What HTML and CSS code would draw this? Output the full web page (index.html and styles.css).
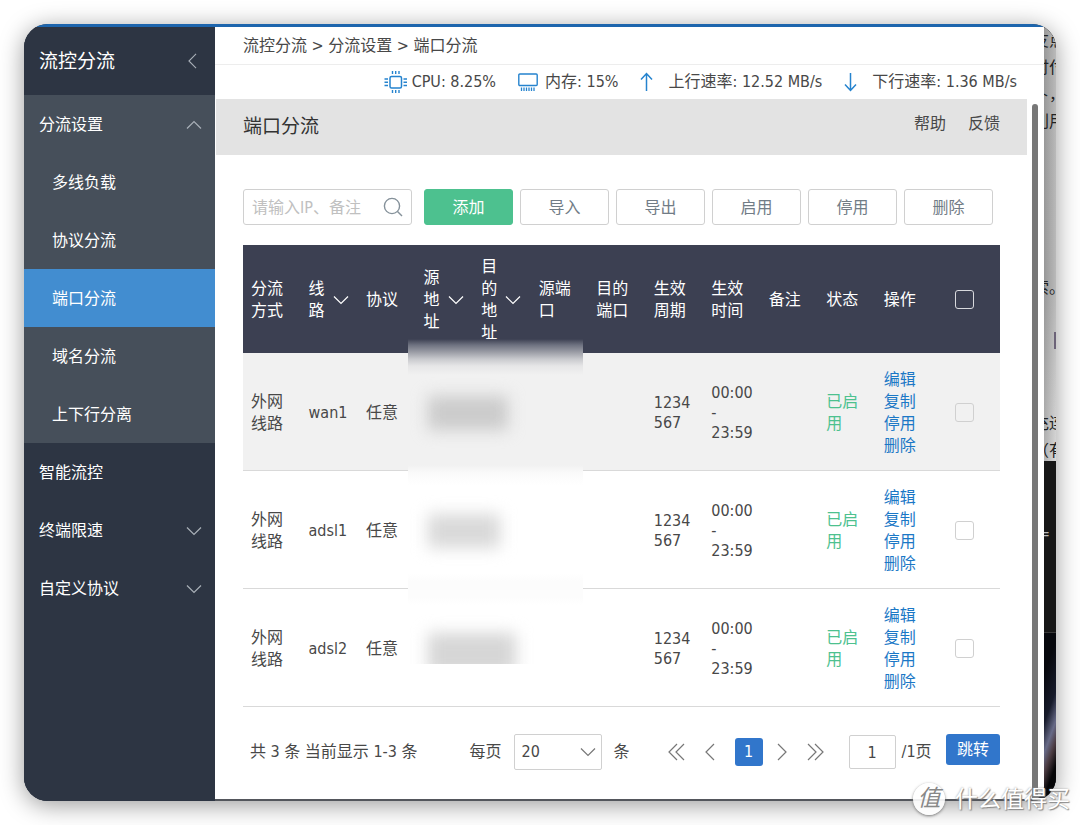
FILE: index.html
```html
<!DOCTYPE html>
<html lang="zh-CN">
<head>
<meta charset="utf-8">
<title>端口分流</title>
<link rel="stylesheet" href="styles.css">
</head>
<body>
<svg class="defs" aria-hidden="true">
  <symbol id="down" viewBox="0 0 16 10"><path d="M1 1.5 8 8.5 15 1.5"/></symbol>
  <symbol id="up" viewBox="0 0 16 10"><path d="M1 8.5 8 1.5 15 8.5"/></symbol>
  <symbol id="left" viewBox="0 0 10 18"><path d="M9 1 1 9 9 17"/></symbol>
  <symbol id="right" viewBox="0 0 10 18"><path d="M1 1 9 9 1 17"/></symbol>
  <symbol id="first" viewBox="0 0 17 18"><path d="M9 1 1 9 9 17M16 1 8 9 16 17"/></symbol>
  <symbol id="last" viewBox="0 0 17 18"><path d="M1 1 9 9 1 17M8 1 16 9 8 17"/></symbol>
</svg>

<div class="frame">
  <div class="topline"></div>
  <div class="window">
    <nav class="sidebar">
      <div class="side-head"><span>流控分流</span><svg class="ico chev-left"><use href="#left"/></svg></div>
      <div class="side-open">
        <a class="item" href="#"><span>分流设置</span><svg class="ico chev"><use href="#up"/></svg></a>
        <a class="item sub" href="#">多线负载</a>
        <a class="item sub" href="#">协议分流</a>
        <a class="item sub active" href="#">端口分流</a>
        <a class="item sub" href="#">域名分流</a>
        <a class="item sub" href="#">上下行分离</a>
      </div>
      <a class="item" href="#">智能流控</a>
      <a class="item" href="#"><span>终端限速</span><svg class="ico chev"><use href="#down"/></svg></a>
      <a class="item" href="#"><span>自定义协议</span><svg class="ico chev"><use href="#down"/></svg></a>
    </nav>

    <main class="main">
      <div class="crumbs">流控分流 &gt; 分流设置 &gt; 端口分流</div>
      <div class="stats">
        <div class="stat cpu">
          <svg width="24" height="24" viewBox="0 0 24 24"><rect x="6" y="6.5" width="11.500" height="11.500" rx="1.500" stroke-width="1.500"/><path d="M8.500 1v3M11.700 1v3M15 1v3M8.500 20v3M11.700 20v3M15 20v3M.5 9h3.500M.5 12.200h3.500M.5 15.500h3.500M19.500 9H23M19.500 12.200H23M19.500 15.500H23" stroke-width="1.400"/></svg>
          <span>CPU: 8.25%</span>
        </div>
        <div class="stat mem">
          <svg width="20" height="20" viewBox="0 0 20 20"><rect x=".8" y="2" width="18.400" height="11.500" rx="1" stroke-width="1.400"/><path d="M3.500 15.500v3.500M6 15.500v3.500M8.500 15.500v3.500M11 15.500v3.500M13.500 15.500v3.500M16 15.500v3.500" stroke-width="1.300"/></svg>
          <span>内存: 15%</span>
        </div>
        <div class="stat rate">
          <svg width="13" height="20" viewBox="0 0 13 20"><path d="M6.500 19V1.500M1 7.500 6.500 1.500 12 7.500" stroke-width="1.500"/></svg>
          <span>上行速率: 12.52 MB/s</span>
        </div>
        <div class="stat rate">
          <svg width="13" height="20" viewBox="0 0 13 20"><path d="M6.500 1v17.500M1 12.500 6.500 18.500 12 12.500" stroke-width="1.500"/></svg>
          <span>下行速率: 1.36 MB/s</span>
        </div>
      </div>

      <div class="scroll">
        <div class="page">
          <header class="title">
            <h1>端口分流</h1>
            <div class="title-links"><a href="#">帮助</a><a href="#">反馈</a></div>
          </header>

          <div class="content">
            <div class="toolbar">
              <label class="search">
                <input type="text" placeholder="请输入IP、备注" aria-label="请输入IP、备注">
                <svg width="20" height="20" viewBox="0 0 20 20"><circle cx="9" cy="9" r="7.600"/><path d="M14.500 14.500 19 19"/></svg>
              </label>
              <button class="btn primary" type="button">添加</button>
              <button class="btn" type="button">导入</button>
              <button class="btn" type="button">导出</button>
              <button class="btn" type="button">启用</button>
              <button class="btn" type="button">停用</button>
              <button class="btn" type="button">删除</button>
            </div>

            <div class="table-wrap">
              <table>
                <thead>
                  <tr>
                    <th>分流方式</th>
                    <th><div class="sort"><span>线路</span><svg class="ico chev"><use href="#down"/></svg></div></th>
                    <th>协议</th>
                    <th><div class="sort"><span>源地址</span><svg class="ico chev"><use href="#down"/></svg></div></th>
                    <th><div class="sort"><span>目的地址</span><svg class="ico chev"><use href="#down"/></svg></div></th>
                    <th>源端口</th>
                    <th>目的端口</th>
                    <th>生效周期</th>
                    <th>生效时间</th>
                    <th>备注</th>
                    <th>状态</th>
                    <th>操作</th>
                    <th class="pick"><input type="checkbox" aria-label="全选"></th>
                  </tr>
                </thead>
                <tbody>
                  <tr class="shade">
                    <td>外网线路</td><td class="name">wan1</td><td>任意</td><td></td><td></td><td></td><td></td>
                    <td class="num">1234<br>567</td><td class="num">00:00<br>-<br>23:59</td><td></td>
                    <td class="on">已启用</td>
                    <td class="acts"><a href="#">编辑</a><a href="#">复制</a><a href="#">停用</a><a href="#">删除</a></td>
                    <td class="pick"><input type="checkbox" aria-label="选择 wan1"></td>
                  </tr>
                  <tr>
                    <td>外网线路</td><td class="name">adsl1</td><td>任意</td><td></td><td></td><td></td><td></td>
                    <td class="num">1234<br>567</td><td class="num">00:00<br>-<br>23:59</td><td></td>
                    <td class="on">已启用</td>
                    <td class="acts"><a href="#">编辑</a><a href="#">复制</a><a href="#">停用</a><a href="#">删除</a></td>
                    <td class="pick"><input type="checkbox" aria-label="选择 adsl1"></td>
                  </tr>
                  <tr>
                    <td>外网线路</td><td class="name">adsl2</td><td>任意</td><td></td><td></td><td></td><td></td>
                    <td class="num">1234<br>567</td><td class="num">00:00<br>-<br>23:59</td><td></td>
                    <td class="on">已启用</td>
                    <td class="acts"><a href="#">编辑</a><a href="#">复制</a><a href="#">停用</a><a href="#">删除</a></td>
                    <td class="pick"><input type="checkbox" aria-label="选择 adsl2"></td>
                  </tr>
                </tbody>
              </table>
              <div class="mask" aria-hidden="true"><i class="smudge one"></i><i class="smudge two"></i><i class="smudge three"></i></div>
            </div>

            <div class="pager">
              <span class="total">共 3 条 当前显示 1-3 条</span>
              <label class="size"><span>每页</span>
                <span class="select"><select><option>20</option></select><svg class="ico chev"><use href="#down"/></svg></span>
                <span>条</span>
              </label>
              <div class="steps">
                <button type="button" aria-label="首页"><svg class="ico double"><use href="#first"/></svg></button>
                <button type="button" aria-label="上一页"><svg class="ico single"><use href="#left"/></svg></button>
                <button type="button" class="current">1</button>
                <button type="button" class="next" aria-label="下一页"><svg class="ico single"><use href="#right"/></svg></button>
                <button type="button" aria-label="末页"><svg class="ico double"><use href="#last"/></svg></button>
              </div>
              <label class="goto"><input type="text" value="1" aria-label="页码"><span>/1页</span></label>
              <button class="jump" type="button">跳转</button>
            </div>
          </div>
        </div>
        <div class="track"><div class="thumb"></div></div>
      </div>
    </main>

    <aside class="behind" aria-hidden="true">
      <div class="paper">
        <p>友点<br>时付<br>卜，<br>利用</p>
        <p class="mid">索。</p>
        <div class="tick"></div>
        <p>充连<br>（有</p>
      </div>
      <div class="dark">=</div>
      <div class="photo"></div>
    </aside>
  </div>
</div>

<div class="watermark"><span class="seal">值</span><span>什么值得买</span></div>
</body>
</html>
```
FILE: styles.css
```css
* { box-sizing: border-box; }

body {
  margin: 0;
  min-height: 100vh;
  padding: 24px;
  display: flex;
  position: relative;
  background: #fff;
  color: #484848;
  font: 16px/22px "DejaVu Sans Condensed", "Noto Sans CJK SC", sans-serif;
}

a { color: inherit; text-decoration: none; }
button, input, select { font: inherit; color: inherit; }
.defs { position: absolute; width: 0; height: 0; }
.ico { flex: none; fill: none; stroke: currentColor; stroke-width: 1.2; }
.chev { width: 16px; height: 10px; }
.chev-left { width: 9px; height: 16px; }

.frame {
  flex: 1;
  min-width: 0;
  display: flex;
  flex-direction: column;
  border-radius: 24px;
  overflow: hidden;
  background: #2d3543;
  box-shadow: 0 4px 24px rgba(0, 0, 0, .4);
}
.topline { height: 3px; background: #1d65ad; }
.window { flex: 1; display: flex; background: linear-gradient(90deg, #2d3543 50%, #08080c 50%); }

/* Side navigation */
.sidebar { width: 191px; flex: none; background: #2d3543; color: #fff; }
.side-head {
  height: 68px;
  padding: 0 18px 0 15px;
  display: flex;
  align-items: center;
  justify-content: space-between;
  font-size: 19px;
}
.side-open { background: #464f5a; }
.item {
  height: 58px;
  padding: 2px 13px 0 15px;
  display: flex;
  align-items: center;
  justify-content: space-between;
}
.item.sub { padding-left: 28px; }
.item.active { background: #428dd0; }
.sidebar .ico { color: #a9b0b8; }

/* Main column */
.main {
  flex: 1;
  min-width: 0;
  display: flex;
  flex-direction: column;
  background: #fff;
  border-bottom: 2px solid #53565c;
  border-radius: 0 0 14px 0;
}
.crumbs { height: 38px; padding: 8px 28px 0; border-bottom: 1px solid #ededed; }
.stats {
  height: 34px;
  padding-right: 27px;
  display: flex;
  align-items: center;
  justify-content: flex-end;
  gap: 22px;
  white-space: nowrap;
}
.stat { display: flex; align-items: center; gap: 7px; }
.stat.cpu { gap: 4px; }
.stat.rate { gap: 15px; }
.stat svg { flex: none; fill: none; stroke: #2583ce; }

.scroll { flex: 1; display: flex; }
.page { flex: 1; min-width: 0; }
.track { width: 17px; padding: 5px 6px 0 5px; display: flex; }
.thumb { flex: 1; background: #777; border-radius: 3px 3px 0 0; }

.title {
  height: 56px;
  margin-left: 1px;
  padding: 0 27px 2px;
  display: flex;
  align-items: center;
  justify-content: space-between;
  background: #e3e3e3;
}
.title h1 { margin: 0; font-size: 19px; font-weight: 400; color: #333; }
.title-links { display: flex; gap: 22px; padding-bottom: 4px; }

.content { padding: 34px 27px 0 28px; }

.toolbar { display: flex; gap: 7px; }
.search {
  width: 169px;
  height: 36px;
  margin-right: 5px;
  padding: 0 8px;
  display: flex;
  align-items: center;
  border: 1px solid #d0d0d0;
  border-radius: 3px;
}
.search input { flex: 1; min-width: 0; padding: 2px 0 0; border: 0; outline: 0; background: none; }
.search input::placeholder { color: #c0c0c0; opacity: 1; }
.search svg { flex: none; fill: none; stroke: #85919a; stroke-width: 1.4; }
.btn {
  width: 89px;
  height: 36px;
  padding: 2px 0 0;
  border: 1px solid #d0d0d0;
  border-radius: 3px;
  background: #fff;
  color: #717c86;
}
.btn.primary { border-color: #4dc18f; background: #4dc18f; color: #fff; }

/* Rules table */
.table-wrap { margin-top: 20px; position: relative; }
table { width: 100%; table-layout: fixed; border-collapse: separate; border-spacing: 0; }
th, td { padding: 2px 8px 0; text-align: left; font-weight: 400; word-break: break-all; }
th { width: 7.6%; height: 108px; background: #3c4052; color: #fff; }
th.pick { width: auto; }
td { height: 118px; border-bottom: 1px solid #d9d9d9; }
.name { white-space: nowrap; }
.num { line-height: 20px; white-space: nowrap; }
.shade td { background: #f1f1f1; }
.sort { display: flex; align-items: center; gap: 8px; }
.sort span { width: 16px; }
.on { color: #4dc18f; }
.acts a { display: block; color: #1b78c6; }
.pick { padding: 0 4px 0 0; text-align: center; }
.pick input {
  appearance: none;
  width: 19px;
  height: 19px;
  margin: 0;
  vertical-align: middle;
  border: 1px solid #d0d0d0;
  border-radius: 3px;
}
th.pick input { border-color: #d8d9dd; }

/* Privacy mask over the address columns */
.mask {
  position: absolute;
  left: 165px;
  top: 94px;
  width: 175px;
  height: 325px;
  overflow: hidden;
  background: linear-gradient(#3c4052 0, #6e7280 6px, #9a9ca5 13px, #c8c9cd 20px, #e6e6e7 27px, #f1f1f1 36px, #f1f1f1 126px, #fafafa 134px, #fff 146px, #fff 235px, #fcfcfc 242px, #fcfcfc 258px, #fff 266px);
}
.smudge { position: absolute; left: 20px; height: 34px; filter: blur(8px); }
.smudge.one { top: 57px; width: 80px; background: #cbcbcb; }
.smudge.two { top: 175px; width: 72px; background: #d9d9d9; }
.smudge.three { top: 294px; width: 88px; height: 42px; background: #d6d6d6; }

/* Pager */
.pager { padding: 27px 0 29px 7px; display: flex; align-items: center; white-space: nowrap; }
.size { display: flex; align-items: center; gap: 12px; margin-left: 52px; }
.select { position: relative; }
.select select {
  appearance: none;
  display: block;
  width: 88px;
  height: 36px;
  padding: 0 7px;
  border: 1px solid #d0d0d0;
  border-radius: 2px;
  background: #fff;
}
.select .ico { position: absolute; right: 6px; top: 13px; pointer-events: none; color: #777; }
.steps { display: flex; align-items: center; gap: 20px; margin-left: 38px; color: #777; }
.steps button { padding: 0; border: 0; background: none; display: flex; align-items: center; justify-content: center; }
.steps .current { width: 28px; height: 28px; border-radius: 3px; background: #3176cb; color: #fff; }
.steps .next { margin-left: -6px; }
.double { width: 17px; height: 18px; }
.single { width: 10px; height: 18px; }
.goto { display: flex; align-items: center; gap: 6px; margin-left: 25px; }
.goto input {
  width: 47px;
  height: 34px;
  padding: 0;
  border: 1px solid #d0d0d0;
  border-radius: 2px;
  text-align: center;
}
.jump {
  width: 54px;
  height: 31px;
  margin: 0 0 5px auto;
  padding: 0;
  border: 0;
  border-radius: 3px;
  background: #3176cb;
  color: #fff;
}

/* Page showing behind the window */
.behind { width: 12px; flex: none; display: flex; flex-direction: column; overflow: hidden; color: #222; }
.paper {
  height: 434px;
  background: linear-gradient(90deg, rgba(0, 0, 0, .18), transparent), linear-gradient(#bababa, #b9b9b9 60%, #d8d8d8);
  overflow: hidden;
}
.paper p { margin: 0 0 0 -11px; width: 40px; line-height: 27px; }
.paper .mid { margin-top: 139px; }
.tick { width: 2px; height: 17px; margin: 31px 0 61px auto; background: #6c6378; }
.dark { flex: 1; min-height: 171px; padding-top: 62px; background: #171717; color: #bbb; text-indent: -6px; border-bottom: 1px solid #3a3a3a; }
.photo { height: 168px; background: linear-gradient(110deg, #07080d 20%, #171b2b 45%, #686b88 60%, #4c3c42 70%, #050507 82%); }

.watermark {
  position: absolute;
  right: 10px;
  bottom: 9px;
  display: flex;
  align-items: center;
  gap: 10px;
  font-size: 23px;
  line-height: 34px;
  color: #fff;
  text-shadow: 1px 1px 1px #888, 0 0 2px #999;
}
.seal {
  width: 32px;
  height: 32px;
  border-radius: 50%;
  background: rgba(255, 255, 255, .9);
  box-shadow: 0 1px 3px #777;
  color: #888;
  font-style: italic;
  text-align: center;
  line-height: 30px;
  text-shadow: none;
}
```
